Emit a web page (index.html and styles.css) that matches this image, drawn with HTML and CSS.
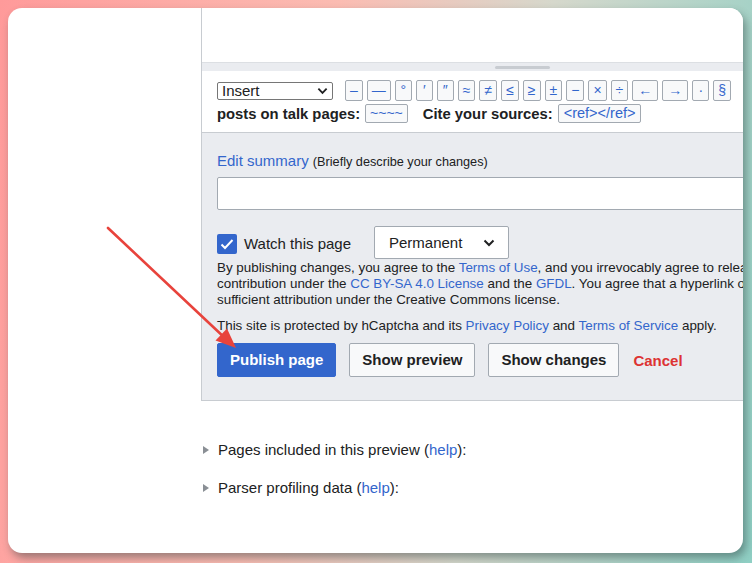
FILE: index.html
```html
<!DOCTYPE html>
<html>
<head>
<meta charset="utf-8">
<link rel="stylesheet" href="styles.css">
</head>
<body>
<div class="card">
  <div class="sidebar"></div>
  <div class="content">
    <div class="editor">
      <div class="textarea"></div>
      <div class="grip"><span class="grip-handle"></span></div>
      <div class="toolbar">
        <div class="tool-row">
          <div class="select">Insert<svg class="chev" width="12" height="8" viewBox="0 0 12 8"><path d="M1.5 1.5 L6 6 L10.5 1.5" fill="none" stroke="#202122" stroke-width="2"/></svg></div>
          <div class="chars">
            <span class="cb">–</span><span class="cb">—</span><span class="cb">°</span><span class="cb">′</span><span class="cb">″</span><span class="cb">≈</span><span class="cb">≠</span><span class="cb">≤</span><span class="cb">≥</span><span class="cb">±</span><span class="cb">−</span><span class="cb">×</span><span class="cb">÷</span><span class="cb wide">←</span><span class="cb wide">→</span><span class="cb">·</span><span class="cb">§</span>
          </div>
        </div>
        <div class="tool-row row2">
          <b>posts on talk pages:</b><span class="cb2">~~~~</span>
          <b class="cite">Cite your sources:</b><span class="cb2 ref">&lt;ref&gt;&lt;/ref&gt;</span>
        </div>
      </div>
      <div class="options">
        <div class="summary-label"><a class="link">Edit summary</a> <span class="hint">(Briefly describe your changes)</span></div>
        <div class="summary-input"></div>
        <div class="watch-row">
          <span class="checkbox"><svg width="14" height="12" viewBox="0 0 14 12"><path d="M1.5 6.5 L5 10 L12.5 2" fill="none" stroke="#fff" stroke-width="2"/></svg></span>
          <span class="watch-label">Watch this page</span>
          <div class="dropdown">Permanent<svg class="chev" width="12" height="8" viewBox="0 0 12 8"><path d="M1.5 1.5 L6 6 L10.5 1.5" fill="none" stroke="#202122" stroke-width="2"/></svg></div>
        </div>
        <p class="notice">By publishing changes, you agree to the <a class="link">Terms of Use</a>, and you irrevocably agree to release your<br>contribution under the <a class="link">CC BY-SA 4.0 License</a> and the <a class="link">GFDL</a>. You agree that a hyperlink or URL is<br>sufficient attribution under the Creative Commons license.</p>
        <p class="captcha">This site is protected by hCaptcha and its <a class="link">Privacy Policy</a> and <a class="link">Terms of Service</a> apply.</p>
        <div class="buttons">
          <span class="btn primary">Publish page</span>
          <span class="btn">Show preview</span>
          <span class="btn">Show changes</span>
          <span class="cancel">Cancel</span>
        </div>
      </div>
    </div>
    <div class="collapsible first"><span class="tri"></span>Pages included in this preview (<a class="link">help</a>):</div>
    <div class="collapsible"><span class="tri"></span>Parser profiling data (<a class="link">help</a>):</div>
  </div>
  <svg class="arrow" width="735" height="545" viewBox="0 0 735 545">
    <line x1="100" y1="220" x2="218" y2="331" stroke="#e8433c" stroke-width="2.6" stroke-linecap="round"/>
    <polygon points="228,340 207.5,332.5 219,320.5" fill="#e8433c"/>
  </svg>
</div>
</body>
</html>
```
FILE: styles.css
```css
html, body {
  margin: 0;
  padding: 0;
}
body {
  width: 752px;
  height: 563px;
  overflow: hidden;
  background: linear-gradient(100deg, #ff9a9a 0%, #fbbcb2 40%, #d6d8cc 65%, #8fcfc4 100%);
  font-family: "Liberation Sans", Arial, sans-serif;
  color: #202122;
}
.card {
  position: relative;
  margin: 8px 0 0 8px;
  width: 735px;
  height: 545px;
  background: #fff;
  border-radius: 14px;
  overflow: hidden;
  display: flex;
  box-shadow: 3px 5px 9px rgba(40, 60, 60, 0.45);
}
.sidebar {
  width: 193px;
  flex: none;
}
.content {
  flex: none;
  width: 700px;
}
.editor {
  width: 640px;
  border-left: 1px solid #c8ccd1;
}
.textarea {
  height: 54px;
  background: #fff;
}
.grip {
  height: 8px;
  background: #eaecf0;
  border-top: 1px solid #dcdfe3;
  display: flex;
  justify-content: center;
  align-items: center;
}
.grip-handle {
  width: 55px;
  height: 3px;
  border-radius: 2px;
  background: #c8ccd1;
}
.toolbar {
  background: #fff;
  padding: 9px 0 0 15px;
  height: 52px;
  border-bottom: 1px solid #c8ccd1;
}
.tool-row {
  display: flex;
  align-items: center;
}
.select {
  width: 106px;
  height: 16px;
  border: 1px solid #767676;
  border-radius: 2px;
  padding: 0 4px;
  font-size: 15px;
  line-height: 16px;
  display: flex;
  align-items: center;
  justify-content: space-between;
  margin-top: 1px;
}
.select .chev {
  width: 11px;
}
.chars {
  display: flex;
  gap: 4px;
  margin-left: 12px;
}
.cb {
  height: 19px;
  border: 1px solid #a2a9b1;
  border-radius: 2px;
  background: #f8f9fa;
  color: #3366cc;
  font-size: 14px;
  line-height: 19px;
  padding: 0 4px;
  min-width: 7px;
  text-align: center;
}
.cb.wide {
  padding: 0 5px;
}
.row2 {
  margin-top: 3px;
  font-size: 14.8px;
}
.cb2 {
  height: 17px;
  border: 1px solid #a2a9b1;
  border-radius: 2px;
  background: #f8f9fa;
  color: #3366cc;
  font-size: 14px;
  line-height: 17px;
  padding: 0 4px;
  margin-left: 5px;
}
.cb2.ref {
  font-size: 14.5px;
  padding: 0 5px;
}
.cite {
  margin-left: 15px;
}
.options {
  background: #eaecf0;
  border-bottom: 1px solid #c8ccd1;
  padding: 18px 15px 23px 15px;
}
.link {
  color: #3366cc;
  text-decoration: none;
}
.summary-label {
  font-size: 15px;
  line-height: 20px;
}
.hint {
  font-size: 12.7px;
}
.summary-input {
  margin-top: 5px;
  height: 31px;
  background: #fff;
  border: 1px solid #a2a9b1;
  border-radius: 2px;
}
.watch-row {
  margin-top: 16px;
  display: flex;
  align-items: center;
  height: 33px;
}
.checkbox {
  width: 20px;
  height: 20px;
  border-radius: 2px;
  background: #3366cc;
  display: flex;
  align-items: center;
  justify-content: center;
  margin-top: 3px;
}
.watch-label {
  font-size: 15px;
  margin-left: 7px;
  margin-top: 1px;
}
.dropdown {
  margin-left: 23px;
  width: 106px;
  height: 31px;
  padding: 0 13px 0 14px;
  background: #fff;
  border: 1px solid #a2a9b1;
  border-radius: 2px;
  font-size: 15px;
  display: flex;
  align-items: center;
  justify-content: space-between;
}
.notice {
  margin: 1px 0 0 0;
  font-size: 13.4px;
  line-height: 16px;
  white-space: nowrap;
}
.captcha {
  margin: 10px 0 0 0;
  font-size: 13.4px;
  line-height: 16px;
  white-space: nowrap;
}
.buttons {
  margin-top: 9px;
  display: flex;
  align-items: center;
}
.btn {
  height: 32px;
  line-height: 32px;
  padding: 0 12px;
  border: 1px solid #a2a9b1;
  border-radius: 2px;
  background: #f8f9fa;
  font-weight: bold;
  font-size: 15px;
  margin-right: 13px;
}
.btn.primary {
  background: #3366cc;
  border-color: #3366cc;
  color: #fff;
  padding: 0 12px;
}
.cancel {
  color: #d33;
  font-weight: bold;
  font-size: 15px;
  margin-left: 1px;
}
.collapsible {
  font-size: 15px;
  line-height: 20px;
  display: flex;
  align-items: center;
  margin-top: 18px;
}
.collapsible.first {
  margin-top: 39px;
}
.tri {
  width: 0;
  height: 0;
  border-top: 4.5px solid transparent;
  border-bottom: 4.5px solid transparent;
  border-left: 6px solid #8a8f95;
  margin: 0 9px 0 2px;
}
.arrow {
  position: absolute;
  left: 0;
  top: 0;
  pointer-events: none;
}
```
